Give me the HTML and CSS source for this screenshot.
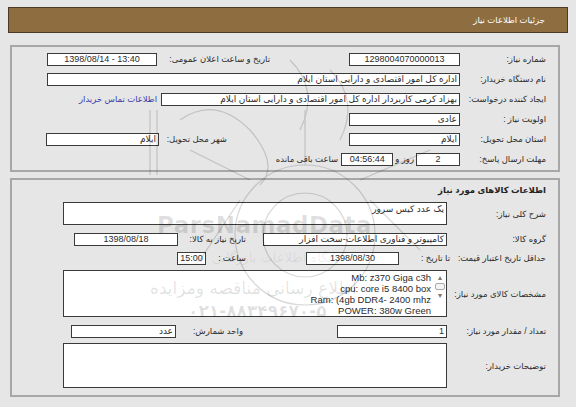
FILE: index.html
```html
<!DOCTYPE html>
<html lang="fa" dir="rtl">
<head>
<meta charset="utf-8">
<title>جزئیات اطلاعات نیاز</title>
<link rel="stylesheet" href="styles.css">
</head>
<body>
<div class="titlebar"><span>جزئیات اطلاعات نیاز</span></div>

<div class="panel p1">
  <div class="row">
    <span class="lbl w86">شماره نیاز:</span>
    <span class="box w111 c">1298004070000013</span>
    <span class="sp w79"></span>
    <span class="lbl w113">تاریخ و ساعت اعلان عمومی:</span>
    <span class="box w110 c" dir="ltr">1398/08/14 - 13:40</span>
  </div>
  <div class="row">
    <span class="lbl w86">نام دستگاه خریدار:</span>
    <span class="box w413">اداره کل امور اقتصادی و دارایی استان ایلام</span>
  </div>
  <div class="row">
    <span class="lbl w86">ایجاد کننده درخواست:</span>
    <span class="box w299">بهزاد کرمی کاربردار اداره کل امور اقتصادی و دارایی استان ایلام</span>
    <a class="link" href="#">اطلاعات تماس خریدار</a>
  </div>
  <div class="row">
    <span class="lbl w86">اولویت نیاز :</span>
    <span class="box w111">عادی</span>
  </div>
  <div class="row">
    <span class="lbl w86">استان محل تحویل:</span>
    <span class="box w111">ایلام</span>
    <span class="sp w122"></span>
    <span class="lbl w68">شهر محل تحویل:</span>
    <span class="box w113">ایلام</span>
  </div>
  <div class="row">
    <span class="lbl w86">مهلت ارسال پاسخ:</span>
    <span class="box w44 c">2</span>
    <span class="txt mid">روز و</span>
    <span class="box w52 c" dir="ltr">04:56:44</span>
    <span class="txt">ساعت باقی مانده</span>
  </div>
</div>

<div class="panel p2">
  <div class="title">اطلاعات کالاهای مورد نیاز</div>
  <div class="row2 r-desc">
    <span class="lbl w99">شرح کلی نیاز:</span>
    <span class="box w384 tall">یک عدد کیس سرور</span>
  </div>
  <div class="row2 r-group">
    <span class="lbl w99">گروه کالا:</span>
    <span class="box w184">کامپیوتر و فناوری اطلاعات-سخت افزار</span>
    <span class="sp w17"></span>
    <span class="lbl w68">تاریخ نیاز به کالا:</span>
    <span class="box w104 c" dir="ltr">1398/08/18</span>
  </div>
  <div class="row2 r-min">
    <span class="lbl w93">حداقل تاریخ اعتبار قیمت:</span>
    <span class="txt w48">تا تاریخ :</span>
    <span class="box w93 c" dir="ltr">1398/08/30</span>
    <span class="sp w60"></span>
    <span class="lbl w40">ساعت :</span>
    <span class="box w29 c" dir="ltr">15:00</span>
  </div>
  <div class="row2 r-spec">
    <span class="lbl w99">مشخصات کالای مورد نیاز:</span>
    <div class="box w384 spec">
      <div class="scroll"><span class="arr">&#9652;</span><span class="thumb"></span><span class="arr">&#9662;</span></div>
      <div class="lines" dir="ltr">
        <div>Mb: z370 Giga c3h</div>
        <div>cpu: core i5 8400 box</div>
        <div>Ram: (4gb DDR4- 2400 mhz</div>
        <div>POWER: 380w Green</div>
      </div>
    </div>
  </div>
  <div class="row2 r-qty">
    <span class="lbl w99">تعداد / مقدار مورد نیاز:</span>
    <span class="box w110">1</span>
    <span class="sp w94"></span>
    <span class="lbl w67">واحد شمارش:</span>
    <span class="box w105">عدد</span>
  </div>
  <div class="row2 r-notes">
    <span class="lbl w99">توضیحات خریدار:</span>
    <span class="box w384 notes"></span>
  </div>
</div>

<div class="watermark" aria-hidden="true">
  <svg class="emblem" width="576" height="407" viewBox="0 0 576 407">
    <g fill="none" stroke="#000" stroke-width="1.2">
      <circle cx="305" cy="235" r="42"/>
      <circle cx="305" cy="235" r="70"/>
      <path d="M150 110 L150 175 M157 110 L157 175"/>
      <path d="M180 120 Q215 95 250 130 Q280 165 260 185"/>
      <path d="M240 200 L200 260 M370 200 L420 250 M305 165 L305 110 M250 180 L190 150 M360 180 L430 150"/>
      <path d="M290 60 Q320 90 300 130 M330 70 Q360 100 340 140"/>
    </g>
  </svg>
  <div class="wm-latin">ParsNamadData</div>
  <div class="wm-fa1">پایگاه اطلاعات بازرگانی ایران</div>
  <div class="wm-fa2">اطلاع رسانی مناقصه ومزایده</div>
  <div class="wm-tel">۰۲۱-۸۸۳۴۹۶۷۰-۵</div>
</div>
</body>
</html>
```
FILE: styles.css
```css
html, body {
  margin: 0;
  padding: 0;
}
body {
  position: relative;
  width: 576px;
  height: 407px;
  overflow: hidden;
  background: #e6e6e6;
  font-family: "Liberation Sans", "DejaVu Sans", sans-serif;
  font-size: 8.5px;
  color: #2b2b2b;
  padding: 7px 8px 0 8px;
  box-sizing: border-box;
}

.titlebar {
  height: 26px;
  box-sizing: border-box;
  border: 1px solid #4b3b25;
  background: #8e6e40;
  color: #fff;
  display: flex;
  align-items: center;
  padding-right: 22px;
  font-size: 8.5px;
}

.panel {
  border: 2px solid #a7a7a7;
  margin-left: 2px;
  margin-right: 8px;
}
.p1 {
  margin-top: 12px;
  padding: 2px 12px 1px 12px;
}
.p2 {
  margin-top: 6px;
  padding: 1px 12px 7px 12px;
}

.row {
  height: 20px;
  display: flex;
  align-items: center;
}
.row2 {
  display: flex;
  align-items: center;
}

.lbl, .txt {
  flex: none;
  white-space: nowrap;
  overflow: visible;
}
.txt { padding: 0 3px; }
.txt.mid { padding: 0 2px; }
.sp { flex: none; }

.box {
  flex: none;
  display: block;
  box-sizing: border-box;
  height: 13px;
  line-height: 11px;
  background: #fff;
  border: 1px solid #3a3a3a;
  padding: 0 2px;
  white-space: nowrap;
  overflow: hidden;
  text-align: right;
  font-size: 9px;
}
.box.c { text-align: center; padding: 0 1px; }

.link {
  color: #3a3aa8;
  text-decoration: none;
  padding-right: 4px;
  white-space: nowrap;
}

.title {
  height: 18px;
  display: flex;
  align-items: center;
  font-weight: bold;
  color: #222;
}

.r-desc { margin-top: 3px; }
.r-group { margin-top: 7px; height: 14px; }
.r-min { margin-top: 5px; height: 14px; }
.r-spec { margin-top: 5px; }
.r-qty { margin-top: 7px; height: 14px; }
.r-notes { margin-top: 5px; }

.box.tall { height: 23px; padding-top: 1px; }
.box.notes { height: 45px; }
.box.spec {
  height: 47px;
  display: flex;
  padding: 1px 0 0 0;
  direction: rtl;
}
.scroll {
  flex: none;
  width: 12px;
  display: flex;
  flex-direction: column;
  align-items: center;
  padding-top: 1px;
  color: #777;
  font-size: 8px;
  line-height: 9px;
}
.thumb {
  width: 8px;
  height: 5px;
  border: 1px solid #aaa;
  border-radius: 2px;
  background: #f4f4f4;
  margin: 1px 0;
}
.lines {
  flex: 1;
  text-align: right;
  line-height: 11px;
  padding-right: 3px;
  font-size: 9.5px;
}

.w17 { width: 17px; }
.w29 { width: 29px; }
.w40 { width: 40px; }
.w44 { width: 44px; }
.w48 { width: 48px; }
.w52 { width: 52px; }
.w60 { width: 60px; }
.w67 { width: 67px; }
.w68 { width: 68px; }
.w79 { width: 79px; }
.w86 { width: 86px; }
.w93 { width: 93px; }
.w94 { width: 94px; }
.w99 { width: 99px; }
.w104 { width: 104px; }
.w105 { width: 105px; }
.w110 { width: 110px; }
.w111 { width: 111px; }
.w113 { width: 113px; }
.w122 { width: 122px; }
.w184 { width: 184px; }
.w299 { width: 299px; }
.w384 { width: 384px; }
.w413 { width: 413px; }

.watermark {
  position: absolute;
  left: 0;
  top: 0;
  width: 576px;
  height: 407px;
  pointer-events: none;
}
.emblem {
  position: absolute;
  left: 0;
  top: 0;
  opacity: 0.15;
}
.wm-latin, .wm-fa1, .wm-fa2, .wm-tel {
  position: absolute;
  white-space: nowrap;
  color: rgba(0, 0, 0, 0.12);
  font-family: "DejaVu Sans", sans-serif;
}
.wm-latin {
  left: 157px;
  top: 212px;
  font-size: 23px;
  font-weight: bold;
  letter-spacing: 0.5px;
}
.wm-fa1 {
  left: 180px;
  top: 250px;
  font-size: 13px;
  color: rgba(0, 0, 0, 0.07);
}
.wm-fa2 {
  left: 150px;
  top: 278px;
  font-size: 17px;
}
.wm-tel {
  left: 188px;
  top: 301px;
  font-size: 17px;
  font-weight: bold;
}
```
